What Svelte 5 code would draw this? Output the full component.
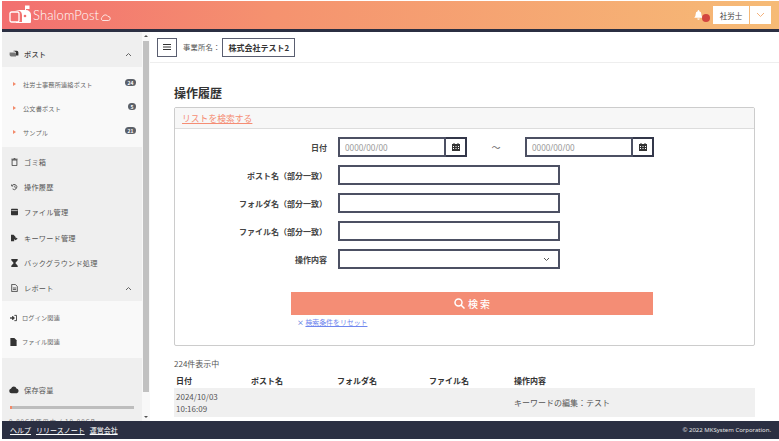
<script>
  const posts = [
    { name: '社労士事務所連絡ポスト', n: 24 },
    { name: '公文書ポスト', n: 5 },
    { name: 'サンプル', n: 21 }
  ];
  const fields = ['ポスト名（部分一致）', 'フォルダ名（部分一致）', 'ファイル名（部分一致）'];
  const cols = ['日付', 'ポスト名', 'フォルダ名', 'ファイル名', '操作内容'];
</script>

<div class="app">
  <header class="top">
    <div class="logo">
      <svg width="23" height="20" viewBox="0 0 23 20">
        <rect x="1" y="7" width="9" height="10" rx="1.500" fill="none" stroke="#fff" stroke-width="1.300" />
        <path d="M6 5h11a5 5 0 0 1 5 5v7a1 1 0 0 1-1 1H7v-1h6V10a5 5 0 0 0-2-4z" fill="#fff" />
        <path d="M16 6V.5h4.500v3.500H17V6z" fill="#fff" />
        <circle cx="16" cy="11" r="1.300" fill="#f2706f" />
      </svg>
      <span class="wordmark">ShalomPost</span>
      <svg class="cloud" width="11" height="7" viewBox="0 0 11 7" fill="none" stroke="#fff" stroke-width="0.8">
        <path d="M2.500 6.500a2 2 0 0 1 0-3.600 3 3 0 0 1 5.500-.4 2 2 0 0 1 .5 4z" />
      </svg>
    </div>
    <div class="top-right">
      <span class="bell">
        <svg width="9" height="10" viewBox="0 0 11 12" fill="#fff">
          <path d="M5.500 0a1 1 0 0 1 1 1v.4A3.600 3.600 0 0 1 9 5c0 3 1.500 3.600 2 4.500H0C.5 8.600 2 8 2 5a3.600 3.600 0 0 1 2.500-3.600V1a1 1 0 0 1 1-1zM4 10.300h3a1.500 1.500 0 0 1-3 0z" />
        </svg>
        <i class="dot"></i>
      </span>
      <span class="role">社労士</span>
      <span class="role-arrow">
        <svg width="9" height="6" viewBox="0 0 9 6" fill="none" stroke="#f4b27c" stroke-width="1"><path d="M1 1l3.500 3.500L8 1" /></svg>
      </span>
    </div>
  </header>

  <div class="body">
    <aside class="side">
      <div class="side-inner">
        <div class="row head">
          <svg class="ic wide" width="10" height="8" viewBox="0 0 11 10" fill="#333"><path d="M0 3h6a2 2 0 0 1 2 2v3H2a2 2 0 0 1-2-2z" fill="#777" /><path d="M5 1h4a2 2 0 0 1 2 2v4H8V4a2 2 0 0 0-3-2z" /></svg>
          <span class="label">ポスト</span>
          <svg class="chev" width="7" height="5" viewBox="0 0 7 5" fill="none" stroke="#666"><path d="M1 4l2.500-2.500L6 4" /></svg>
        </div>
        <div class="subs posts">
          {#each posts as p}
            <div class="sub">
              <i class="tri"></i>
              <span class="sub-name">{p.name}</span>
              <span class="badge">{p.n}</span>
            </div>
          {/each}
        </div>
        <div class="row">
          <svg class="ic" viewBox="0 0 8 10" fill="none" stroke="#333"><path d="M1 2.500h6V9.500H1zM0 1.500h8M3 .5h2" /></svg>
          <span class="label">ゴミ箱</span>
        </div>
        <div class="row">
          <svg class="ic" viewBox="0 0 11 10" fill="none" stroke="#333" stroke-width="1.200"><path d="M2 2.500A4 4 0 1 1 2.500 8M1 1v2.500h2.500M6 3v2.500l1.500 1" /></svg>
          <span class="label">操作履歴</span>
        </div>
        <div class="row">
          <svg class="ic" viewBox="0 0 10 9" fill="#333"><path d="M0 1a1 1 0 0 1 1-1h8a1 1 0 0 1 1 1v7a1 1 0 0 1-1 1H1a1 1 0 0 1-1-1z" /><path d="M.5 2.500h9" stroke="#efefef" /></svg>
          <span class="label">ファイル管理</span>
        </div>
        <div class="row">
          <svg class="ic" viewBox="0 0 11 10" fill="#333"><path d="M0 0h4l3 3v2.500L5 8v2H0z" /><path d="M7 4l3.500 2L7 8.500l-1-1z" /></svg>
          <span class="label">キーワード管理</span>
        </div>
        <div class="row">
          <svg class="ic" viewBox="0 0 8 10" fill="#333"><path d="M0 0h8v1.500L5 5l3 3.500V10H0V8.500L3 5 0 1.500z" /></svg>
          <span class="label">バックグラウンド処理</span>
        </div>
        <div class="row">
          <svg class="ic" viewBox="0 0 8 10" fill="none" stroke="#333"><path d="M.5.500h4.500l2.500 2.500v6.500h-7z" /><path d="M2 5h4M2 7h4" /></svg>
          <span class="label">レポート</span>
          <svg class="chev" width="7" height="5" viewBox="0 0 7 5" fill="none" stroke="#666"><path d="M1 4l2.500-2.500L6 4" /></svg>
        </div>
        <div class="subs reports">
          <div class="sub">
            <svg class="sub-ic" viewBox="0 0 8 7" fill="none" stroke="#333"><path d="M5 .5h2.500v6H5" /><path d="M0 3.500h3.500" stroke-width="1.500" /><path d="M3 1.500l2 2-2 2z" fill="#333" /></svg>
            <span class="sub-name">ログイン関連</span>
          </div>
          <div class="sub">
            <svg class="sub-ic" viewBox="0 0 7 9" fill="#333"><path d="M0 0h4.500L7 2.500V9H0z" /></svg>
            <span class="sub-name">ファイル関連</span>
          </div>
        </div>
        <div class="storage">
          <div class="storage-label">
            <svg class="ic wide" viewBox="0 0 12 8" fill="#333"><path d="M3 8a3 3 0 0 1-.5-5.900A3.500 3.500 0 0 1 9 2.200 3 3 0 0 1 9.500 8z" /></svg>
            <span class="label">保存容量</span>
          </div>
          <div class="bar"><i></i></div>
          <div class="usage">0.00GB使用中 / 10.00GB</div>
        </div>
      </div>
      <div class="scroll">
        <i class="up"></i>
        <div class="thumb"></div>
        <i class="down"></i>
      </div>
    </aside>

    <main class="main">
      <div class="office">
        <button class="menu" aria-label="menu">
          <svg width="8" height="6" viewBox="0 0 8 6" stroke="#333" stroke-width="1"><path d="M0 .5h8M0 3h8M0 5.500h8" /></svg>
        </button>
        <span class="office-label">事業所名：</span>
        <span class="office-name">株式会社テスト2</span>
      </div>

      <div class="content">
        <h1>操作履歴</h1>
        <section class="card">
          <div class="card-head"><a href="#top" class="search-link">リストを検索する</a></div>
          <div class="form">
            <div class="f-row">
              <span class="f-label">日付</span>
              <div class="date"><span class="ph">0000/00/00</span></div>
              <span class="cal">
                <svg width="8" height="8" viewBox="0 0 8 8" fill="#333"><path d="M0 1h8v7H0zM1 3v1h1V3zm2.500 0v1h1V3zM6 3v1h1V3zM1 5v1h1V5zm2.500 0v1h1V5zM6 5v1h1V5z" fill-rule="evenodd" /><path d="M1.500 0h1v1h-1zM5.500 0h1v1h-1z" /></svg>
              </span>
              <span class="tilde">～</span>
              <div class="date"><span class="ph">0000/00/00</span></div>
              <span class="cal">
                <svg width="8" height="8" viewBox="0 0 8 8" fill="#333"><path d="M0 1h8v7H0zM1 3v1h1V3zm2.500 0v1h1V3zM6 3v1h1V3zM1 5v1h1V5zm2.500 0v1h1V5zM6 5v1h1V5z" fill-rule="evenodd" /><path d="M1.500 0h1v1h-1zM5.500 0h1v1h-1z" /></svg>
              </span>
            </div>
            {#each fields as f}
              <div class="f-row">
                <span class="f-label">{f}</span>
                <div class="input"></div>
              </div>
            {/each}
            <div class="f-row">
              <span class="f-label">操作内容</span>
              <div class="input select">
                <svg width="7" height="5" viewBox="0 0 7 5" fill="none" stroke="#555"><path d="M1 1l2.500 2.500L6 1" /></svg>
              </div>
            </div>
            <button class="submit">
              <svg width="11" height="11" viewBox="0 0 11 11" fill="none" stroke="#fff" stroke-width="1.500"><circle cx="4.500" cy="4.500" r="3.500" /><path d="M7 7l3.500 3.500" /></svg>
              <span>検 索</span>
            </button>
            <div class="reset"><span class="x">×</span> <a href="#top">検索条件をリセット</a></div>
          </div>
        </section>

        <div class="count">224件表示中</div>
        <div class="table">
          <div class="tr th">
            {#each cols as c}<span>{c}</span>{/each}
          </div>
          <div class="tr td">
            <span>2024/10/03<br />10:16:09</span>
            <span></span>
            <span></span>
            <span></span>
            <span>キーワードの編集：テスト</span>
          </div>
        </div>
      </div>
    </main>
  </div>

  <footer class="foot">
    <nav>
      <a href="#top">ヘルプ</a>
      <a href="#top">リリースノート</a>
      <a href="#top">運営会社</a>
    </nav>
    <span class="copy">© 2022 MKSystem Corporation.</span>
  </footer>
</div>

<style>
  :global(body) {
    margin: 0;
    background: #fff;
    overflow: hidden;
  }
  .app {
    height: 441px;
    padding: 1px 0 2px 2px;
    box-sizing: border-box;
    display: flex;
    flex-direction: column;
    overflow: hidden;
    font-family: "Noto Sans CJK JP", "Noto Sans", sans-serif;
    color: #444;
  }
  .top {
    height: 28px;
    flex: none;
    border-bottom: 3px solid #2b2f42;
    background: linear-gradient(90deg, #f26f70 0%, #f5926f 35%, #f6bb76 100%);
    display: flex;
    align-items: center;
    justify-content: space-between;
    padding: 0 8px 0 7px;
  }
  .logo {
    display: flex;
    align-items: center;
    color: #fff;
    margin-top: -1px;
  }
  .wordmark {
    font-family: "Lato", "Noto Sans", sans-serif;
    font-size: 13px;
    font-weight: 300;
    letter-spacing: 0.1px;
    margin-left: 1px;
  }
  .cloud { margin-top: 5px; margin-left: 1px; }
  .top-right {
    display: flex;
    align-items: center;
    gap: 1px;
  }
  .bell {
    position: relative;
    display: flex;
    margin-right: 9px;
  }
  .dot {
    position: absolute;
    left: 8px;
    top: 4px;
    width: 8px;
    height: 8px;
    border-radius: 50%;
    background: #d2453f;
  }
  .role {
    width: 36px;
    height: 18px;
    background: #fff;
    font-size: 7.500px;
    color: #444;
    display: flex;
    align-items: center;
    justify-content: center;
  }
  .role-arrow {
    width: 21px;
    height: 18px;
    background: #fff;
    display: flex;
    align-items: center;
    justify-content: center;
  }
  .body {
    flex: 1;
    min-height: 0;
    display: flex;
  }
  .side {
    width: 148px;
    flex: none;
    display: flex;
    background: #efefef;
    overflow: hidden;
  }
  .side-inner {
    width: 140px;
    flex: none;
  }
  .row {
    height: 25.300px;
    display: flex;
    align-items: center;
    padding: 0 8px 0 7px;
    font-size: 7.200px;
    color: #555;
  }
  .row.head {
    height: 35px;
    box-sizing: border-box;
    padding-top: 9px;
    color: #444;
  }
  .row:nth-child(3) {
    margin-top: 2px;
  }
  .ic {
    width: 7px;
    height: 8px;
    padding: 0 2px;
    flex: none;
    margin-right: 4px;
  }
  .ic.wide {
    width: 10px;
    height: 8px;
    padding: 0 1px 0 0;
  }
  .label {
    flex: 1;
    letter-spacing: 0.2px;
  }
  .head .label { font-weight: 500; }
  .chev { margin-right: 2px; }
  .subs {
    background: #f9f9f9;
  }
  .posts { height: 80px; box-sizing: border-box; padding-top: 5px; }
  .reports { height: 57px; box-sizing: border-box; padding-top: 5px; }
  .sub {
    height: 24px;
    display: flex;
    align-items: center;
    padding: 0 6px 0 11px;
    font-size: 6.200px;
    color: #666;
  }
  .tri {
    width: 0;
    height: 0;
    border-left: 3px solid #f28a6a;
    border-top: 2.500px solid transparent;
    border-bottom: 2.500px solid transparent;
    margin-right: 7px;
    flex: none;
  }
  .sub-ic {
    width: 7px;
    height: 8px;
    flex: none;
    margin: 0 5px 0 -3px;
  }
  .sub-name { flex: 1; white-space: nowrap; letter-spacing: 0.15px; }
  .badge {
    min-width: 3px;
    padding: 0 2.500px;
    height: 7px;
    border-radius: 5px;
    background: #5b6068;
    color: #fff;
    font-size: 5px;
    font-weight: 700;
    line-height: 7px;
    text-align: center;
    margin-top: -3px;
  }
  .storage {
    padding-top: 26px;
    padding-left: 7px;
    font-size: 7.200px;
    color: #555;
  }
  .storage-label {
    display: flex;
    align-items: center;
    height: 12px;
  }
  .bar {
    margin: 10px 7px 0 1px;
    width: 124px;
    height: 3px;
    background: #bdbdbd;
  }
  .bar i {
    display: block;
    width: 2px;
    height: 3px;
    background: #f28a6a;
  }
  .usage {
    margin-top: 8px;
    font-size: 6.200px;
    letter-spacing: 1px;
    color: #777;
    white-space: nowrap;
  }
  .scroll {
    width: 8px;
    flex: none;
    background: #f8f8f8;
    display: flex;
    flex-direction: column;
    align-items: center;
  }
  .thumb {
    width: 6px;
    height: 351px;
    margin-top: 3.500px;
    background: #c1c1c1;
  }
  .up, .down {
    width: 0;
    height: 0;
    border-left: 2px solid transparent;
    border-right: 2px solid transparent;
  }
  .up { border-bottom: 2.500px solid #505050; margin-top: 3px; }
  .down { border-top: 2.500px solid #505050; margin-top: auto; margin-bottom: 3px; }
  .main {
    flex: 1;
    min-width: 0;
    overflow: hidden;
    background: #fff;
  }
  .office {
    height: 31px;
    box-sizing: border-box;
    border-bottom: 1px solid #eee;
    display: flex;
    align-items: center;
    padding: 0 0 0 7px;
  }
  .menu {
    width: 20px;
    height: 19px;
    padding: 0;
    border: 1px solid #5a5e70;
    background: #fff;
    display: flex;
    align-items: center;
    justify-content: center;
    margin-right: 6px;
  }
  .office-label {
    font-size: 7.300px;
    color: #555;
    margin-right: 2px;
    white-space: nowrap;
    letter-spacing: 0.2px;
  }
  .office-name {
    border: 1px solid #5a5e70;
    height: 19px;
    width: 73px;
    box-sizing: border-box;
    display: flex;
    align-items: center;
    justify-content: center;
    font-size: 8px;
    font-weight: 700;
    color: #333;
    white-space: nowrap;
  }
  .content {
    padding: 21px 24px 0 24px;
  }
  h1 {
    margin: 0;
    font-size: 12px;
    font-weight: 700;
    line-height: 18px;
    color: #333;
  }
  .card {
    margin-top: 5px;
    border: 1px solid #ccc;
    border-radius: 2px;
    height: 239px;
    box-sizing: border-box;
  }
  .card-head {
    height: 21px;
    box-sizing: border-box;
    background: #f7f7f7;
    border-bottom: 1px solid #ddd;
    padding-left: 7px;
    display: flex;
    align-items: center;
  }
  .search-link {
    font-size: 8.800px;
    color: #f58d74;
  }
  .form {
    padding-top: 8px;
  }
  .f-row {
    display: flex;
    align-items: center;
    height: 20px;
    margin-bottom: 8px;
    font-size: 8px;
  }
  .f-label {
    width: 152px;
    text-align: right;
    font-weight: 700;
    color: #444;
    margin-right: 11px;
    white-space: nowrap;
  }
  .date, .input {
    box-sizing: border-box;
    height: 20px;
    border: 2px solid #4c5063;
    background: #fff;
  }
  .date {
    width: 108px;
    display: flex;
    align-items: center;
    padding-left: 5px;
  }
  .ph {
    color: #999;
    font-family: "Noto Sans", sans-serif;
    font-size: 8px;
  }
  .cal {
    box-sizing: border-box;
    width: 21px;
    height: 20px;
    border: 2px solid #33374a;
    border-left: none;
    display: flex;
    align-items: center;
    justify-content: center;
  }
  .tilde {
    width: 58px;
    text-align: center;
    color: #666;
    font-size: 9px;
  }
  .input { width: 222px; }
  .select {
    display: flex;
    align-items: center;
    justify-content: flex-end;
    padding-right: 8px;
  }
  .submit {
    margin: 23px 0 0 116px;
    width: 362px;
    height: 23px;
    border: none;
    background: #f48d75;
    color: #fff;
    display: flex;
    align-items: center;
    justify-content: center;
    gap: 3px;
    font: 500 10px "Noto Sans CJK JP", sans-serif;
    padding: 0;
  }
  .reset {
    margin: 1px 0 0 122px;
    font-size: 6.900px;
    line-height: 12px;
  }
  .reset .x { color: #4a6fd8; }
  .reset a { color: #6f86ee; }
  .count {
    margin-top: 12px;
    font-size: 8px;
    line-height: 12px;
    color: #555;
  }
  .table {
    margin-top: 5px;
    font-size: 8px;
  }
  .tr {
    display: grid;
    grid-template-columns: 75px 86px 92px 85px 1fr;
    padding-left: 2px;
  }
  .th {
    font-weight: 700;
    height: 13px;
    line-height: 12px;
    color: #333;
  }
  .td {
    background: #f0f0f0;
    height: 29px;
    align-items: center;
    line-height: 12px;
    color: #555;
  }
  .foot {
    height: 18px;
    flex: none;
    background: #2b2f42;
    display: flex;
    align-items: center;
    justify-content: space-between;
    padding: 0 8px;
    position: relative;
    z-index: 1;
  }
  nav {
    display: flex;
    gap: 5px;
  }
  nav a {
    color: #fff;
    font-size: 7px;
  }
  .copy {
    color: #e4e4e4;
    font-size: 6px;
    font-family: "Noto Sans", sans-serif;
  }
</style>
